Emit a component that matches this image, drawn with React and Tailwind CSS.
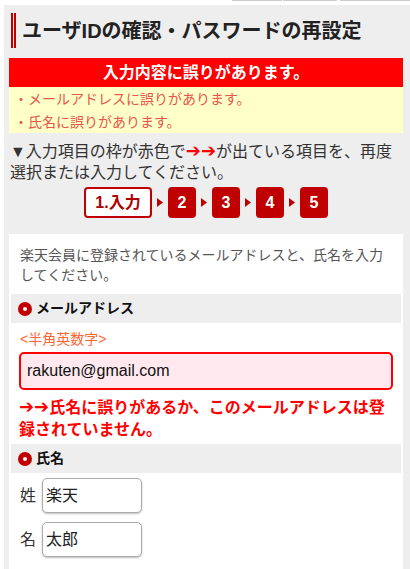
import React from "react";

const jp = { fontFamily: '"Liberation Sans", "Noto Sans CJK JP", "DejaVu Sans", sans-serif' };
const arrow = { fontFamily: '"DejaVu Sans", sans-serif' };

function Arrows() {
  return (
    <span style={arrow} className="text-[18px] font-bold leading-none text-[#ff0000]">
      ➔➔
    </span>
  );
}

function Triangle() {
  return (
    <svg width="6" height="9" viewBox="0 0 6 9" className="mx-[5px]">
      <polygon points="0,0 6,4.5 0,9" fill="#c00000" />
    </svg>
  );
}

function SectionHead({ label }) {
  return (
    <div className="mx-[2px] flex h-[29px] items-center bg-[#eeeeee] pl-[7px]">
      <span className="box-border h-[14px] w-[14px] rounded-full border-[5px] border-[#c00000] bg-white" />
      <span className="ml-[4px] text-[14px] font-bold text-[#111]">{label}</span>
    </div>
  );
}

function NameRow({ label, value }) {
  return (
    <div className="flex items-center pl-[11px]">
      <span className="w-[22px] text-[16px] text-[#333]">{label}</span>
      <div className="flex h-[35px] w-[100px] items-center rounded-[5px] border border-[#aaaaaa] bg-white pl-[3px] text-[16px] text-[#222] shadow-[0_1px_2px_rgba(0,0,0,0.25)]">
        {value}
      </div>
    </div>
  );
}

export default function App() {
  const steps = ["2", "3", "4", "5"];
  return (
    <div style={jp} className="relative min-h-screen bg-white pl-[4px] pt-[5px]">
      <div className="absolute left-0 top-0 flex w-full">
        <div className="ml-[232px] h-px w-[50px] bg-[#cccccc]" />
        <div className="ml-px h-px w-[54px] bg-[#cccccc]" />
        <div className="ml-[3px] h-px w-[70px] bg-[#cccccc]" />
      </div>
      <div className="min-h-[564px] bg-[#eeeeee] pl-[5px] pr-[7px]">
        <div className="ml-[2px] flex h-[35px] items-center pt-[8px] box-content">
          <span className="h-[35px] w-[2px] bg-[#c00000]" />
          <span className="ml-px h-[35px] w-[2px] bg-[#c00000]" />
          <h1 className="ml-[6px] text-[20px] font-bold leading-none text-[#222]">
            ユーザIDの確認・パスワードの再設定
          </h1>
        </div>

        <div className="mt-[10px] flex h-[29px] items-center justify-center bg-[#ff0000] text-[16px] font-bold text-white">
          入力内容に誤りがあります。
        </div>
        <div className="h-[46px] bg-[#ffffc8] pl-[5px] pt-[1px] text-[14px] leading-[23px] text-[#e8554e]">
          <p>・メールアドレスに誤りがあります。</p>
          <p>・氏名に誤りがあります。</p>
        </div>

        <p className="mt-[8px] pl-px text-[16px] leading-[21px] text-[#333]">
          ▼入力項目の枠が赤色で<Arrows />が出ている項目を、再度選択または入力してください。
        </p>

        <div className="mt-[4px] flex items-center justify-center">
          <div className="flex h-[31px] w-[68px] items-center justify-center rounded-[4px] border-2 border-[#c00000] bg-white text-[16px] font-bold text-[#b00000]">
            1.入力
          </div>
          {steps.map((s) => (
            <React.Fragment key={s}>
              <Triangle />
              <div className="flex h-[31px] w-[28px] items-center justify-center rounded-[4px] bg-[#c00000] text-[16px] font-bold text-white">
                {s}
              </div>
            </React.Fragment>
          ))}
        </div>

        <div className="mt-[16px] bg-white pb-[20px] pt-[11px]">
          <p className="px-[11px] text-[14px] leading-[20px] text-[#555]">
            楽天会員に登録されているメールアドレスと、氏名を入力してください。
          </p>

          <div className="mt-[9px]">
            <SectionHead label="メールアドレス" />
          </div>
          <p className="mt-[6px] pl-[11px] text-[14px] leading-[20px] text-[#ff6633]">
            &lt;半角英数字&gt;
          </p>
          <div className="mx-[10px] mt-[3px] flex h-[38px] items-center rounded-[5px] border-2 border-[#ff0000] bg-[#ffe8ee] pl-[6px] text-[16px] text-[#111]">
            rakuten@gmail.com
          </div>
          <p className="mt-[7px] px-[10px] text-[16px] font-bold leading-[22px] text-[#ff0000]">
            <Arrows />氏名に誤りがあるか、このメールアドレスは登録されていません。
          </p>

          <div className="mt-[3px]">
            <SectionHead label="氏名" />
          </div>
          <div className="mt-[5px] flex flex-col gap-[9px]">
            <NameRow label="姓" value="楽天" />
            <NameRow label="名" value="太郎" />
          </div>
        </div>
      </div>
    </div>
  );
}
